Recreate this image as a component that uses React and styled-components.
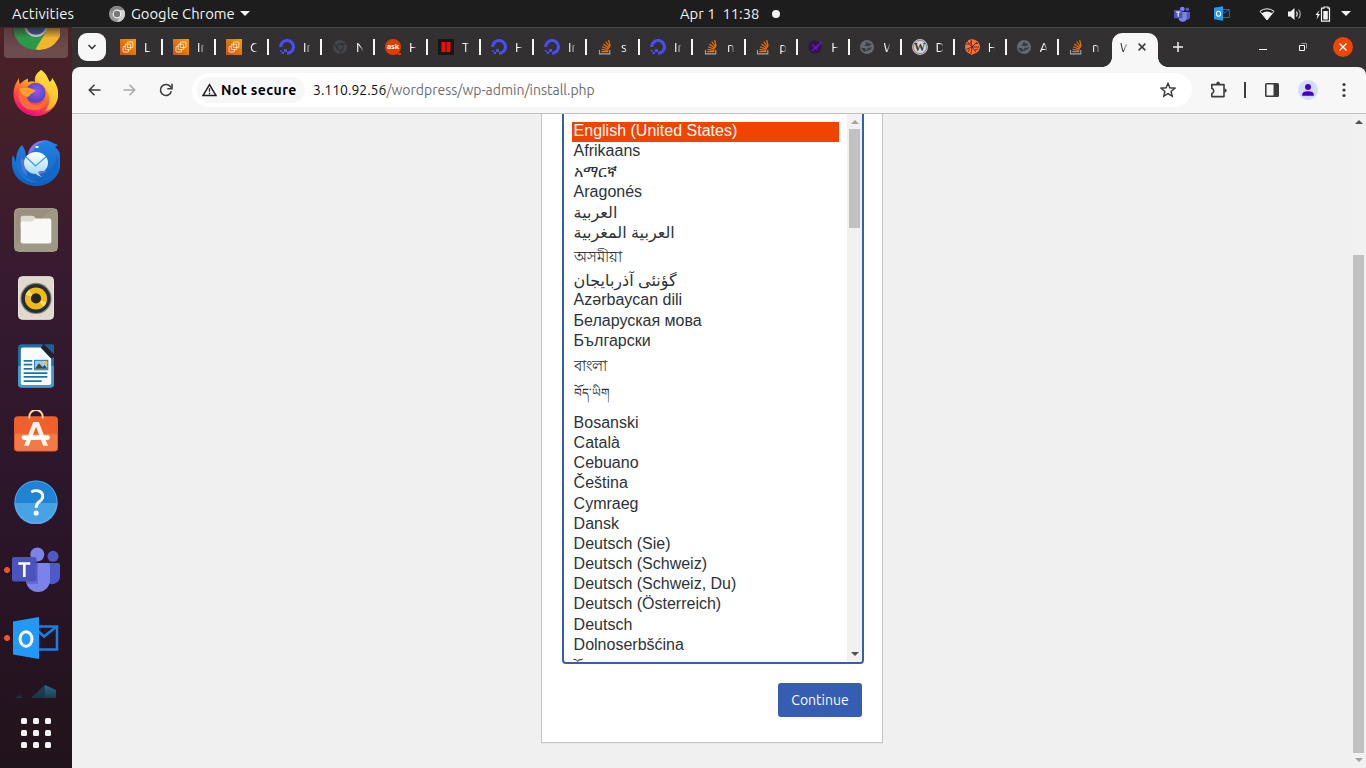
import React from "react";
import styled, { createGlobalStyle, css } from "styled-components";

const Global = createGlobalStyle`
  * { box-sizing: border-box; }
  html, body { margin: 0; padding: 0; overflow: hidden; }
  body { font-family: "Ubuntu", "Noto Sans", sans-serif; }
  svg { display: block; flex: none; }
`;

const Desktop = styled.div`
  width: 1366px;
  height: 768px;
  display: flex;
  flex-direction: column;
  overflow: hidden;
  background: #2c1527;
`;

/* ---------- system bar ---------- */
const SystemBar = styled.header`
  height: 27px;
  flex: none;
  display: grid;
  grid-template-columns: 660px 140px 1fr;
  align-items: center;
  background: #1d1d1d;
  color: #f2f2f2;
  font-size: 14.8px;
  line-height: 26px;
`;
const BarLeft = styled.div`
  display: flex;
  align-items: center;
  padding-left: 12px;
`;
const BarLabel = styled.span`
  white-space: pre;
  width: ${(p) => p.$w}px;
  letter-spacing: ${(p) => p.$ls || 0}px;
`;
const AppMenu = styled.div`
  display: flex;
  align-items: center;
  margin-left: 35px;
  gap: 6px;
`;
const Clock = styled.div`
  display: flex;
  align-items: center;
  padding-left: 20px;
`;
const Dot = styled.i`
  width: 8px;
  height: 8px;
  border-radius: 50%;
  background: #f2f2f2;
`;
const Tray = styled.div`
  display: flex;
  align-items: center;
  justify-content: flex-end;
  padding-right: 15px;
`;
const Gap = styled.span`
  flex: none;
  width: ${(p) => p.$w}px;
`;
const Caret = styled.i`
  border: 5px solid transparent;
  border-top-color: #f2f2f2;
  border-bottom: 0;
`;

/* ---------- dock ---------- */
const Body = styled.div`
  flex: 1;
  min-height: 0;
  display: flex;
`;
const Dock = styled.nav`
  width: 72px;
  flex: none;
  display: flex;
  flex-direction: column;
  align-items: center;
  background: linear-gradient(#4a2226 0, #431f29 100px, #361a30 260px, #2c162a 470px, #271423 600px, #21131b 741px);
`;
const ChromeSlot = styled.div`
  width: 64px;
  height: 30px;
  margin-top: 1px;
  flex: none;
  border-radius: 0 0 4px 4px;
  background: linear-gradient(#5a3a3e, #6d4c50 70%);
  display: flex;
  justify-content: center;
  overflow: hidden;
`;
const DockItem = styled.div`
  width: 72px;
  height: ${(p) => p.$h || 68}px;
  flex: none;
  display: flex;
  align-items: center;
  justify-content: center;
  ${(p) =>
    p.$running &&
    css`
      background: radial-gradient(circle at 7px 50%, #ee5424 2.6px, transparent 3.3px);
    `}
`;
const AppGrid = styled.div`
  display: grid;
  grid-template-columns: repeat(3, 6px);
  gap: 6px;
  margin-top: 11px;
`;
const AppDot = styled.i`
  width: 6px;
  height: 6px;
  border-radius: 1.5px;
  background: #f4f2f2;
`;

/* ---------- browser ---------- */
const Browser = styled.section`
  flex: 1;
  min-width: 0;
  display: flex;
  flex-direction: column;
  background: #323031;
`;
const TabStrip = styled.div`
  height: 40px;
  flex: none;
  display: flex;
  align-items: center;
  padding-left: 6px;
  border-top: 1px solid #474646;
`;
const TabSearch = styled.button`
  width: 28px;
  height: 28px;
  border: 0;
  padding: 0;
  margin: 0 14px 1px 0;
  border-radius: 9px;
  background: #f7f7f7;
  display: grid;
  place-items: center;
`;
const Tab = styled.div`
  width: ${(p) => p.$w}px;
  flex: none;
  display: flex;
  align-items: center;
  margin-bottom: 1px;
`;
const Favicon = styled.span`
  width: 16px;
  height: 16px;
  flex: none;
`;
const TabTitle = styled.span`
  width: 7px;
  height: 18px;
  line-height: 18px;
  margin-left: 8px;
  flex: none;
  font-size: 13.5px;
  overflow: hidden;
  white-space: nowrap;
  color: ${(p) => (p.$dark ? "#3c3c3c" : "#fff")};
  mask-image: linear-gradient(90deg, #000 50%, rgba(0, 0, 0, 0.2));
`;
const TabRule = styled.i`
  width: 2px;
  height: 16px;
  margin-left: 10px;
  background: #f7f7f7;
`;
const ActiveTab = styled.div`
  width: 46px;
  height: 34px;
  align-self: flex-end;
  flex: none;
  display: flex;
  align-items: center;
  gap: 11px;
  border-radius: 10px 10px 0 0;
  background: #f7f7f7;
  position: relative;
  padding-bottom: 6px;
  &::before,
  &::after {
    content: "";
    position: absolute;
    bottom: 0;
    width: 10px;
    height: 10px;
  }
  &::before {
    left: -10px;
    background: radial-gradient(circle at 0 0, transparent 9.6px, #f7f7f7 10.2px);
  }
  &::after {
    right: -10px;
    background: radial-gradient(circle at 100% 0, transparent 9.6px, #f7f7f7 10.2px);
  }
`;
const WindowControls = styled.div`
  display: flex;
  align-items: center;
  margin: 0 0 1px auto;
  padding-right: 13px;
`;
const CloseButton = styled.span`
  width: 20px;
  height: 20px;
  border-radius: 50%;
  background: #f04400;
  display: grid;
  place-items: center;
`;
const Toolbar = styled.div`
  height: 47px;
  flex: none;
  display: flex;
  align-items: center;
  background: #f7f7f7;
  border-bottom: 1px solid #c1c3c1;
  border-radius: 8px 8px 0 0;
  padding-left: 14px;
`;
const Omnibox = styled.div`
  width: 1000px;
  height: 34px;
  margin-left: 18px;
  flex: none;
  display: flex;
  align-items: center;
  border-radius: 17px;
  background: #fff;
  padding: 0 16px 0 5px;
  font-size: 14px;
`;
const SecurityChip = styled.div`
  width: 108px;
  height: 26px;
  border-radius: 13px;
  background: #f7f7f7;
  display: flex;
  align-items: center;
  padding-left: 5px;
  gap: 4px;
  font-weight: 700;
  font-size: 14px;
  letter-spacing: 0.4px;
  white-space: nowrap;
`;
const Url = styled.span`
  flex: 1;
  margin-left: 8px;
  color: #6e6e6e;
  font-size: 14px;
  white-space: nowrap;
  letter-spacing: -0.01px;
  b { font-weight: 400; color: #111; }
`;
const ToolbarRule = styled.i`
  width: 2px;
  height: 16px;
  background: #3c3c3c;
`;
const Avatar = styled.span`
  width: 20px;
  height: 20px;
  border-radius: 50%;
  background: #d3dcfd;
`;

/* ---------- page ---------- */
const Viewport = styled.div`
  flex: 1;
  min-height: 0;
  display: flex;
  background: #f0f0f0;
`;
const PageArea = styled.main`
  flex: 1;
  display: flex;
  justify-content: center;
  align-items: flex-start;
`;
const PageScroll = styled.div`
  width: 15px;
  flex: none;
  display: flex;
  flex-direction: column;
  align-items: center;
  background: #f1f1f1;
  padding: 6px 0 4px;
`;
const PageThumb = styled.i`
  width: 11px;
  height: 498px;
  margin: 131px 0 5px;
  background: #c1c1c1;
`;
const Arrow = styled.i`
  flex: none;
  border: 4px solid transparent;
  ${(p) =>
    p.$up
      ? css`border-top: 0; border-bottom-color: ${p.$c};`
      : css`border-bottom: 0; border-top-color: ${p.$c};`}
`;
const Card = styled.section`
  width: 342px;
  height: 629px;
  margin: 0 0 0 1px;
  padding: 0 18px 0 20px;
  display: flex;
  flex-direction: column;
  background: #fff;
  border: 1px solid #c3c4c7;
  border-top: 0;
  box-shadow: 0 1px 1px rgba(0, 0, 0, 0.04);
`;
const LanguageList = styled.div`
  width: 302px;
  height: 550px;
  flex: none;
  border: 2px solid #355db2;
  border-top: 0;
  border-radius: 0 0 4px 4px;
  display: flex;
  overflow: hidden;
`;
const Options = styled.ul`
  list-style: none;
  margin: 0;
  padding: 7.8px 8px 0 8px;
  width: 283px;
  flex: none;
  overflow: hidden;
  font-family: "Liberation Sans", "DejaVu Sans", sans-serif;
  font-size: 16px;
  color: #2c3338;
`;
const Option = styled.li`
  height: ${(p) => p.$h}px;
  line-height: ${(p) => p.$lh || p.$h - 1.4}px;
  padding-left: 1.6px;
  white-space: nowrap;
  font-size: ${(p) => p.$fs || 16}px;
  ${(p) =>
    p.$selected &&
    css`
      background: #f04400;
      color: #fff;
    `}
`;
const ListScroll = styled.div`
  width: 15px;
  background: #f1f1f1;
  display: flex;
  flex-direction: column;
  align-items: center;
  justify-content: space-between;
  padding: 6px 0;
`;
const ListThumbGroup = styled.div`
  display: flex;
  flex-direction: column;
  align-items: center;
  gap: 5px;
`;
const ListThumb = styled.i`
  width: 11px;
  height: 99px;
  background: #c1c1c1;
`;
const Continue = styled.button`
  width: 84px;
  height: 34px;
  margin: 19px 2px 0 0;
  align-self: flex-end;
  border: 0;
  border-radius: 3px;
  padding: 0;
  background: #355db2;
  color: #fff;
  font: 400 14px/34px "Ubuntu", "Noto Sans", sans-serif;
`;

/* ---------- icons ---------- */
const Aws = () => (
  <svg width="16" height="16" viewBox="0 0 16 16">
    <defs>
      <linearGradient id="aws" x1="0" y1="1" x2="1" y2="0">
        <stop offset="0" stopColor="#c8511b" />
        <stop offset="1" stopColor="#ff9900" />
      </linearGradient>
    </defs>
    <rect width="16" height="16" fill="url(#aws)" />
    <g fill="none" stroke="#fff" strokeWidth=".8" opacity=".92">
      <rect x="7.3" y="3" width="5.6" height="5.6" rx=".8" />
      <rect x="5.2" y="5.2" width="5.4" height="5.4" rx=".8" />
      <path d="M5 7.500H3.800q-.8 0-.8.8v3.900q0 .8.8.8h3.900q.8 0 .8-.8v-1.500" />
    </g>
  </svg>
);
const Ocean = () => (
  <svg width="16" height="16" viewBox="0 0 16 16">
    <path d="M8 14.3A6.4 6.4 0 1 0 1.7 8" fill="none" stroke="#4a4cf5" strokeWidth="3.1" />
    <path d="M5 10h3v3H5zM2.7 12.8H5V15H2.7zM.9 11h1.8v1.8H.9z" fill="#4a4cf5" />
  </svg>
);
const DarkChrome = () => (
  <svg width="16" height="16" viewBox="0 0 16 16">
    <circle cx="8" cy="8" r="7" fill="#454649" />
    <circle cx="8" cy="8" r="3.2" fill="none" stroke="#303133" strokeWidth="1.2" />
    <path d="M8 4.8h6.2M5.2 9.6 2.1 4.4M10.8 9.6 7.7 15" stroke="#303133" strokeWidth="1.1" />
  </svg>
);
const AskText = styled.text`
  font: 700 7.6px "Noto Sans", sans-serif;
`;
const Ask = () => (
  <svg width="16" height="16" viewBox="0 0 16 16">
    <circle cx="8" cy="8" r="8" fill="#e63a05" />
    <path d="M10 14h6v2h-2z" fill="#e63a05" />
    <AskText x="1.9" y="10.3" fill="#fff" textLength="12.2" lengthAdjust="spacingAndGlyphs">ask</AskText>
  </svg>
);
const RedBars = () => (
  <svg width="16" height="16" viewBox="0 0 16 16">
    <rect width="16" height="16" fill="#1b1616" />
    <path d="M3.5 3h4v10h-3q-1 0-1-1zM8.500 3h4v9q0 1-1 1h-3z" fill="#f90a0a" />
  </svg>
);
const Stack = () => (
  <svg width="16" height="16" viewBox="0 0 16 16">
    <path d="M2.5 11v3.9h10.3V11" fill="none" stroke="#a5a7aa" strokeWidth="1.1" />
    <g stroke="#f2700c" strokeWidth="1.2">
      <path d="M4.3 12.7h7M4.5 10.4l6.8 1.1M5 7.7l6.6 2.6M6.4 4.9l5.7 4.3M8.7 2.5l4.2 5.8M11.6 1l1.6 6.2" />
    </g>
  </svg>
);
const PurpleX = () => (
  <svg width="16" height="16" viewBox="0 0 16 16">
    <circle cx="8" cy="8" r="7.1" fill="#2b1a39" stroke="#43205d" strokeWidth="1" />
    <path d="M4.6 12 14.800 2.600 9.800 8.600z" stroke="#6d12d8" strokeWidth="1.100" fill="#6d12d8" />
    <path d="m5.2 5 5.2 6" stroke="#6d12d8" strokeWidth="1.2" />
  </svg>
);
const Globe = () => (
  <svg width="16" height="16" viewBox="0 0 16 16">
    <circle cx="8" cy="8" r="7" fill="#666a70" />
    <path d="M8.500 2.600 6.600 4.200v1.500L5 7h4.600v1.700H8.300v1.900H6.500L6 9H3.600L2.600 7.900a5.400 5.400 0 0 0 3.600 5.200v-1.200h2.200l2.100-1.300h1.200q1-1.200.9-2.600h-1.800V6.200h1.500q-.2-1.500-1.700-2.500L9.300 5z" fill="#3a3a3c" />
    <path d="M9.600 7h1.800v2H9.600z" fill="#666a70" />
  </svg>
);
const WpMark = styled.text`
  font: 700 11.5px "Liberation Serif", serif;
`;
const WordPress = () => (
  <svg width="16" height="16" viewBox="0 0 16 16">
    <circle cx="8" cy="8" r="7.4" fill="#d9dadb" stroke="#b9babb" strokeWidth="1.1" />
    <circle cx="8" cy="8" r="6.5" fill="none" stroke="#4e4f50" strokeWidth=".6" />
    <WpMark x="2" y="12" fill="#3b3b3c" textLength="12">W</WpMark>
  </svg>
);
const OrangeBall = () => (
  <svg width="16" height="16" viewBox="0 0 16 16">
    <path d="M8 .3A7.7 7.4 0 0 1 9.5 15L7.3 16l-1-1.1A7.5 7.5 0 0 1 8 .3z" fill="#ff7038" />
    <path d="m8 8-5-6M8 8 7 1m1 7 5-5M8 8h7M8 8l4 5M8 8l-1 7M8 8l-6 2.5M2 5l3.5.3L8 2M11 4.8l3-.3M10.5 11l3.5-1M4 13l1.5-3" stroke="#473028" strokeWidth=".9" fill="none" />
  </svg>
);
const MiniTeams = () => (
  <svg width="16" height="16" viewBox="0 0 48 46">
    <circle cx="40" cy="9" r="5.5" fill="#5059c9" />
    <path d="M30 17h18v14a9 9 0 0 1-18 0z" fill="#5059c9" />
    <circle cx="25" cy="8" r="7" fill="#7b83eb" />
    <path d="M14 17h24v17a12 12 0 0 1-24 0z" fill="#7b83eb" />
    <rect y="11" width="25" height="25" rx="2" fill="#4b53bc" />
    <path d="M6 17h13M12.5 17v14" stroke="#fff" strokeWidth="3.5" />
  </svg>
);
const Teams = () => (
  <svg width="48" height="46" viewBox="0 0 48 46">
    <circle cx="41" cy="9.3" r="5.5" fill="#5059c9" />
    <path d="M30 16h16.500q1.500 0 1.500 1.500V29a8 8 0 0 1-12 7z" fill="#5059c9" />
    <circle cx="25.300" cy="7.500" r="7" fill="#7b83eb" />
    <path d="M14 16h22.500q1.500 0 1.500 1.500V33a12 12 0 0 1-24 0z" fill="#7b83eb" />
    <path d="M14 16h12v21H14.400z" fill="#5961c2" opacity=".7" />
    <rect y="10" width="24.500" height="24.500" rx="2" fill="#4b53bc" />
    <path d="M6.300 16.500h12M12.300 16.500v13.500" stroke="#fff" strokeWidth="2.700" fill="none" />
  </svg>
);
const Outlook = ({ w = 46, h = 42 }) => (
  <svg width={w} height={h} viewBox="0 0 46 42">
    <path d="M24 9.500h20v23H24M25 14l6 5.500L43 10" fill="none" stroke="#1a7ee0" strokeWidth="2.500" />
    <path d="M0 4.500 26 0v42L0 37.500z" fill="#2299f8" />
    <ellipse cx="13" cy="22" rx="6" ry="7.300" fill="none" stroke="#fff" strokeWidth="3" />
  </svg>
);
const MenuChrome = () => (
  <svg width="16" height="16" viewBox="0 0 16 16">
    <circle cx="8" cy="8" r="8" fill="#9a9a9a" />
    <path d="M8 4h7a8 8 0 0 1-7 12l3.400-6z" fill="#cfcfcf" />
    <path d="M8 0a8 8 0 0 0-7 4l3.500 6L8 4h7a8 8 0 0 0-7-4z" fill="#858585" />
    <circle cx="8" cy="8" r="3.800" fill="#777" stroke="#f4f4f4" strokeWidth="1.200" />
  </svg>
);
const DockChrome = () => (
  <svg width="48" height="24" viewBox="0 24 48 24">
    <defs>
      <linearGradient id="fade" x1="0" y1="0" x2="0" y2="1">
        <stop offset="0" stopColor="#37222a" stopOpacity=".65" />
        <stop offset="1" stopColor="#37222a" stopOpacity="0" />
      </linearGradient>
    </defs>
    <circle cx="24" cy="23" r="23" fill="#2a9a48" />
    <path d="M24 12h23A23 23 0 0 1 26 46l-2.500-1L34 28z" fill="#f1b62b" />
    <circle cx="24" cy="21" r="12" fill="#d9d5dc" />
    <circle cx="24" cy="21" r="9.800" fill="#3c4e96" />
    <path d="M0 24h48v10H0z" fill="url(#fade)" />
  </svg>
);
const Firefox = () => (
  <svg width="46" height="46" viewBox="0 0 46 46">
    <defs>
      <linearGradient id="fx" x1=".8" y1="0" x2=".35" y2="1">
        <stop offset=".1" stopColor="#fff04a" />
        <stop offset=".4" stopColor="#ff9a26" />
        <stop offset=".68" stopColor="#ff4c3e" />
        <stop offset="1" stopColor="#e60a80" />
      </linearGradient>
      <radialGradient id="fxc" cx=".55" cy=".4">
        <stop offset="0" stopColor="#9059f0" />
        <stop offset="1" stopColor="#5b45c0" />
      </radialGradient>
    </defs>
    <path d="M28 0c6 4 7 9 8.500 12 2-1 2.500-2 2.500-4 5 7 6.500 12 6 18C44 38 34 46 23 46S0 37 .500 23C1 16 3 13 6 8c0 3 0 5 1 6 3-3 6-5 8-5.500L15 12c3-1 5-1 7 0-1-6 2-9 6-12z" fill="url(#fx)" />
    <path d="M28 0c6 4 7 9 8.500 12 2-1 2.500-2 2.500-4 5 7 6.500 12 6 18-1 9-7 14-13 15 7-8 5-18-1-25-6-4-11-5-3-16z" fill="#ffd936" opacity=".75" />
    <circle cx="22.500" cy="23" r="10.200" fill="url(#fxc)" />
    <path d="M6 18c5-3 10 0 16 2 1 2-4 3-5 5s-4 3-4 1 1 5 4 7c7 4 13 1 18-4-2 9-9 12-16 11C8 39 4 29 6 18z" fill="#ff6a3a" />
    <path d="M6 19c5-3 10-1 16.500 1.300-1 2.500-4.500 2.700-5.500 4.700-2 3-6 1-8-1z" fill="#ffa22b" />
  </svg>
);
const Thunderbird = () => (
  <svg width="48" height="46" viewBox="0 0 48 46">
    <defs>
      <linearGradient id="tb" x1="0" y1="0" x2="0" y2="1">
        <stop offset="0" stopColor="#2383e8" />
        <stop offset="1" stopColor="#105fb8" />
      </linearGradient>
      <linearGradient id="env" x1="0" y1="0" x2="0" y2="1">
        <stop offset="0" stopColor="#fff" />
        <stop offset="1" stopColor="#a8dcff" />
      </linearGradient>
    </defs>
    <path d="M10 5c3 4 4 8 4 12l3-5C19 4 29-1 37 1c3 1 5 3 9 4l-3 2c5 4 5 7 5 11 3 15-8 28-23 28C10 46 0 36 0 23c0-4 0-6 1-8l3 7C4 13 6 9 10 5z" fill="url(#tb)" />
    <path d="M16 14C18 5 26-1 36 1 28 1 22 6 22 10z" fill="#8b74e4" />
    <path d="M35 31c6-2 10-9 9-17 6 12-2 25-14 28z" fill="#1268ca" />
    <path d="M8 18c-2 13 6 23 21 24-10 2-22-2-25-18z" fill="#1675d7" />
    <path d="M9 19c-1 8 1 14 6 17l-1-16z" fill="#6f7be4" opacity=".6" />
    <ellipse cx="24" cy="23" rx="12" ry="11" fill="url(#env)" />
    <path d="M22 33c3 1 8 2 13-2l-6 0z" fill="#7667d3" />
    <path d="M22 32q3 4 8 5-4-3-4-6z" fill="#a8dcff" />
    <path d="m14 17 9.500 9L34 17" fill="none" stroke="#4c98de" strokeWidth="1.300" />
    <ellipse cx="25" cy="7" rx="1.800" ry="1" fill="#fff" />
  </svg>
);
const Files = () => (
  <svg width="44" height="44" viewBox="0 0 46 46">
    <rect x=".7" y=".7" width="44.600" height="44.600" rx="4" fill="#98907d" stroke="#b5ac99" />
    <path d="M1 39 39 1h6v44H1z" fill="#a39b89" opacity=".7" />
    <path d="M7 10q0-2 2-2h10q2 0 3 2l1 2h8v8H7z" fill="#dedbcf" />
    <path d="M7 16q0-2 2-2h10l3-3h15q2 0 2 2v22q0 2-2 2H9q-2 0-2-2z" fill="#f8f8f7" />
  </svg>
);
const Speaker = () => (
  <svg width="36" height="44" viewBox="0 0 38 46">
    <rect x=".5" y=".5" width="37" height="45" rx="4" fill="#dfdacd" stroke="#f0ece2" />
    <circle cx="19" cy="23.500" r="16.500" fill="#83847f" />
    <circle cx="19" cy="23.500" r="15.300" fill="#272d38" />
    <circle cx="19" cy="23.500" r="11.700" fill="#f2ba15" />
    <path d="M19 23.500 8 19.500a11.700 11.700 0 0 1 3.300-4.800zM19 23.500l8 8.600a11.700 11.700 0 0 0 3-4.600z" fill="#f9dc61" />
    <circle cx="19" cy="23.500" r="5.400" fill="#24262a" />
  </svg>
);
const Writer = () => (
  <svg width="36" height="44" viewBox="0 0 38 46">
    <path d="M4 0h22l12 14v28q0 4-4 4H4q-4 0-4-4V4q0-4 4-4z" fill="#1f6ea6" />
    <path d="M0 23h38v19q0 4-4 4H4q-4 0-4-4z" fill="#4399c8" />
    <path d="M5 3.500h19L35 15v26q0 2-2 2H5q-2 0-2-2V5.500q0-2 2-2z" fill="#f8fafb" />
    <path d="M27.500 0H36q2 0 2 2v8.500z" fill="#1c648f" />
    <path d="M24 3.500 35 15l3-1.500L27 0z" fill="#23202f" />
    <path d="M6 17.500h9M6 21.500h9M6 26h9M6 30.500h25M6 34.500h25M6 39h19" stroke="#1b75ad" strokeWidth="1.900" />
    <rect x="17.500" y="17" width="14" height="10" fill="#9acbe8" stroke="#1b75ad" />
    <path d="m18 26 4-6 4 4 2-2 3 4z" fill="#394c55" />
    <circle cx="29" cy="19.500" r="1.800" fill="#f5c431" />
  </svg>
);
const Software = () => (
  <svg width="44" height="42" viewBox="0 0 46 44">
    <rect y="6.500" width="46" height="37" rx="4" fill="#f0602a" />
    <path d="M1 25h44v14q0 3.500-3.500 3.500h-37Q1 42.500 1 39z" fill="#f37a47" />
    <path d="M16 9V7a6.800 6.800 0 0 1 14 0v2" fill="none" stroke="#f7d9a4" strokeWidth="2" />
    <path d="m10.500 37.500 9.500-25h6l9.500 25h-5l-7.500-20-7.500 20z" fill="#fff4ec" />
    <rect x="8" y="26.500" width="29.500" height="4.800" rx="2.400" fill="#fff" />
  </svg>
);
const Help = () => (
  <svg width="44" height="44" viewBox="0 0 46 46">
    <circle cx="23" cy="23" r="22.500" fill="#2183d3" />
    <path d="M.5 24h45a22.500 22.500 0 0 1-45 0z" fill="#47a3e3" />
    <circle cx="23" cy="23" r="22" fill="none" stroke="#64b4ec" opacity=".7" />
    <path d="M18 12.500q4-2 7.500-1 5 1.500 4.500 6-.3 3-4 5.500-2.800 2-2.800 6" fill="none" stroke="#fff" strokeWidth="3" />
    <circle cx="23.200" cy="34.500" r="2.700" fill="#fff" />
  </svg>
);
const Peek = () => (
  <svg width="42" height="13" viewBox="0 0 42 13">
    <defs>
      <linearGradient id="peek" x1="0" y1="0" x2="0" y2="1">
        <stop offset="0" stopColor="#2a6d8c" />
        <stop offset="1" stopColor="#1d3b4d" />
      </linearGradient>
    </defs>
    <path d="M16 13 30 0l11 5v8z" fill="url(#peek)" />
    <path d="M30 0v13H16z" fill="#173547" opacity=".7" />
    <path d="m0 13 4-3 4 3z" fill="#183544" />
  </svg>
);
const Line = ({ d, w = 16, h = 16, c = "#3c3c3c", s = 1.6 }) => (
  <svg width={w} height={h} viewBox={`0 0 ${w} ${h}`}>
    <path d={d} fill="none" stroke={c} strokeWidth={s} />
  </svg>
);
const Wifi = () => (
  <svg width="16" height="14" viewBox="0 0 16 14">
    <path d="M1 4.300a11 11 0 0 1 14 0L8 13z" fill="none" stroke="#f2f2f2" strokeWidth="1" />
    <path d="M2.800 6.300a8 8 0 0 1 10.400 0L8 13z" fill="#f2f2f2" />
  </svg>
);
const Volume = () => (
  <svg width="16" height="14" viewBox="0 0 16 14">
    <path d="M1 4.500h2.500L7.500 1v12l-4-3.500H1z" fill="#f2f2f2" />
    <path d="M9.500 4.500q1.600 2.500 0 5" fill="none" stroke="#f2f2f2" strokeWidth="1.200" />
    <path d="M11.500 2.500q3.500 4.500 0 9" fill="none" stroke="#aaa" strokeWidth="1.200" />
  </svg>
);
const Battery = () => (
  <svg width="16" height="16" viewBox="0 0 16 16">
    <path d="M4.500 4 .500 9h2L1.600 13.500 5 8H3z" fill="#f2f2f2" />
    <path d="M9 2.200V1h4v1.200h1.500v13h-8v-13z" fill="none" stroke="#f2f2f2" strokeWidth="1.200" />
    <path d="M8.300 5h4.500v8.500H8.300z" fill="#f2f2f2" />
  </svg>
);
const Puzzle = () => (
  <svg width="20" height="20" viewBox="0 0 20 20">
    <path d="M2.800 4.600H15v12H2.800v-3q1.900-.7 1.900-2.600T2.800 8.300z" fill="none" stroke="#3c3c3c" strokeWidth="1.600" strokeLinejoin="round" />
    <path d="M7.200 4a1.800 2.400 0 0 1 3.800 0zM15.500 8.500a2.200 2.100 0 0 1 0 4.200z" fill="#3c3c3c" />
  </svg>
);
const SidePanel = () => (
  <svg width="14" height="14" viewBox="0 0 14 14">
    <rect x=".8" y=".8" width="12.400" height="12.400" rx=".8" fill="none" stroke="#3c3c3c" strokeWidth="1.600" />
    <path d="M8.500 1h4.500v12H8.500z" fill="#3c3c3c" />
  </svg>
);
const Dots = () => (
  <svg width="4" height="16" viewBox="0 0 4 16">
    {[2.5, 8, 13.5].map((y) => (
      <circle key={y} cx="2" cy={y} r="1.600" fill="#3c3c3c" />
    ))}
  </svg>
);
const Person = () => (
  <svg width="20" height="20" viewBox="0 0 20 20">
    <circle cx="10" cy="7" r="3" fill="#4200c8" />
    <path d="M4.200 15.800v-1.200q0-3.400 5.800-3.400t5.800 3.400v1.200z" fill="#4200c8" />
  </svg>
);
const Star = () => (
  <svg width="16" height="16" viewBox="0 0 16 16">
    <path d="m8 1.300 1.900 4.500 4.900.4-3.700 3.200 1.100 4.800L8 11.700l-4.200 2.500 1.100-4.800L1.200 6.200l4.900-.4z" fill="none" stroke="#3c3c3c" strokeWidth="1.500" />
  </svg>
);
const Warning = () => (
  <svg width="15" height="14" viewBox="0 0 15 14">
    <path d="M7.500 1.700 14 12.600H1z" fill="none" stroke="#1f1f1f" strokeWidth="1.500" />
    <path d="M7.500 5.200v3.600M7.500 9.800v1.400" stroke="#1f1f1f" strokeWidth="1.300" />
  </svg>
);
const Reload = () => (
  <svg width="14" height="14" viewBox="0 0 14 14">
    <path d="M12.300 8.300A5.500 5.500 0 1 1 11.300 3.600L12.600 5" fill="none" stroke="#3c3c3c" strokeWidth="1.600" />
    <path d="M13 .7v5H8.300" fill="none" stroke="#3c3c3c" strokeWidth="1.600" />
  </svg>
);

/* ---------- data ---------- */
const tabs = [
  [Aws, "L"], [Aws, "In"], [Aws, "C"], [Ocean, "In"], [DarkChrome, "N"], [Ask, "H"],
  [RedBars, "T"], [Ocean, "H"], [Ocean, "In"], [Stack, "s"], [Ocean, "In"], [Stack, "n"],
  [Stack, "p"], [PurpleX, "H"], [Globe, "W"], [WordPress, "D"], [OrangeBall, "H"], [Globe, "A"],
  [Stack, "n"],
];

const languages = [
  { t: "English (United States)", selected: true },
  { t: "Afrikaans" },
  { t: "አማርኛ", h: 21, lh: 19.5 },
  { t: "Aragonés", h: 20.6, lh: 18.8 },
  { t: "العربية" },
  { t: "العربية المغربية" },
  { t: "অসমীয়া", h: 26, lh: 27, fs: 14.6 },
  { t: "گؤنئی آذربایجان", h: 21.2, lh: 21.8 },
  { t: "Azərbaycan dili" },
  { t: "Беларуская мова" },
  { t: "Български" },
  { t: "বাংলা", h: 27, lh: 29, fs: 14.6 },
  { t: "བོད་ཡིག", h: 34.9, lh: 29, fs: 12 },
  { t: "Bosanski" },
  { t: "Català" },
  { t: "Cebuano" },
  { t: "Čeština" },
  { t: "Cymraeg" },
  { t: "Dansk" },
  { t: "Deutsch (Sie)" },
  { t: "Deutsch (Schweiz)" },
  { t: "Deutsch (Schweiz, Du)" },
  { t: "Deutsch (Österreich)" },
  { t: "Deutsch" },
  { t: "Dolnoserbšćina" },
  { t: "རྫོང་ཁ", h: 34.6, lh: 23, fs: 12 },
];

export default function App() {
  return (
    <>
      <Global />
      <Desktop>
        <SystemBar>
          <BarLeft>
            <BarLabel $w={62} $ls={0.15}>Activities</BarLabel>
            <AppMenu>
              <MenuChrome />
              <BarLabel $w={103}>Google Chrome</BarLabel>
              <Caret />
            </AppMenu>
          </BarLeft>
          <Clock>
            <BarLabel $w={92}>{"Apr 1  11:38"}</BarLabel>
            <Dot />
          </Clock>
          <Tray>
            <MiniTeams />
            <Gap $w={24} />
            <Outlook w={16} h={15} />
            <Gap $w={29} />
            <Wifi />
            <Gap $w={12} />
            <Volume />
            <Gap $w={12} />
            <Battery />
            <Gap $w={10} />
            <Caret />
          </Tray>
        </SystemBar>

        <Body>
          <Dock>
            <ChromeSlot><DockChrome /></ChromeSlot>
            <DockItem $h={70}><Firefox /></DockItem>
            <DockItem $h={70}><Thunderbird /></DockItem>
            <DockItem $h={64}><Files /></DockItem>
            <DockItem $h={72}><Speaker /></DockItem>
            <DockItem $h={64}><Writer /></DockItem>
            <DockItem $h={66}><Software /></DockItem>
            <DockItem $h={76}><Help /></DockItem>
            <DockItem $h={60} $running><Teams /></DockItem>
            <DockItem $h={76} $running><Outlook /></DockItem>
            <DockItem $h={31}><Peek /></DockItem>
            <AppGrid>
              {Array.from({ length: 9 }, (_, i) => <AppDot key={i} />)}
            </AppGrid>
          </Dock>

          <Browser>
            <TabStrip>
              <TabSearch>
                <Line w={10} h={8} d="M1.500 2 5 5.500 8.500 2" />
              </TabSearch>
              {tabs.map(([Icon, title], i) => (
                <Tab key={i} $w={i < 11 ? 53 : i === 18 ? 43.95 : 52.15}>
                  <Favicon><Icon /></Favicon>
                  <TabTitle>{title}</TabTitle>
                  {i < 18 && <TabRule />}
                </Tab>
              ))}
              <ActiveTab>
                <TabTitle $dark>W</TabTitle>
                <Line w={8} h={8} d="M.6.6l6.800 6.800M7.400.6.6 7.400" s={1.5} />
              </ActiveTab>
              <Gap $w={15} />
              <Line w={10} h={11} d="M5 0v10M0 5h10" c="#f0f0f0" s={1.5} />
              <WindowControls>
                <Line w={8} h={8} d="M0 6.500h8" c="#fff" s={1} />
                <Gap $w={32} />
                <svg width="8" height="8" viewBox="0 0 8 8">
                  <path d="M2.500.500h5v5" fill="none" stroke="#999" />
                  <path d="M.5 2.500h5v5h-5z" fill="none" stroke="#fff" />
                </svg>
                <Gap $w={26} />
                <CloseButton>
                  <Line w={8} h={8} d="M.5.5l7 7M7.500.5l-7 7" c="#fff" s={1.4} />
                </CloseButton>
              </WindowControls>
            </TabStrip>

            <Toolbar>
              <Gap $w={2} />
              <Line w={13} h={12} d="M12.500 6H1.500M6.500.8 1.300 6l5.200 5.200" />
              <Gap $w={22} />
              <Line w={13} h={12} d="M.5 6h11M6.500.8 11.700 6l-5.200 5.200" c="#aaa" />
              <Gap $w={23} />
              <Reload />
              <Gap $w={1} />
              <Omnibox>
                <SecurityChip>
                  <Warning />
                  Not secure
                </SecurityChip>
                <Url><b>3.110.92.56</b>/wordpress/wp-admin/install.php</Url>
                <Star />
              </Omnibox>
              <Gap $w={17} />
              <Puzzle />
              <Gap $w={15} />
              <ToolbarRule />
              <Gap $w={19} />
              <SidePanel />
              <Gap $w={19} />
              <Avatar><Person /></Avatar>
              <Gap $w={24} />
              <Dots />
            </Toolbar>

            <Viewport>
              <PageArea>
                <Card>
                  <LanguageList>
                    <Options>
                      {languages.map((l) => (
                        <Option key={l.t} $selected={l.selected} $h={l.h || 20.2} $lh={l.lh} $fs={l.fs}>
                          {l.t}
                        </Option>
                      ))}
                    </Options>
                    <ListScroll>
                      <ListThumbGroup>
                        <Arrow $up $c="#a3a3a3" />
                        <ListThumb />
                      </ListThumbGroup>
                      <Arrow $c="#505050" />
                    </ListScroll>
                  </LanguageList>
                  <Continue>Continue</Continue>
                </Card>
              </PageArea>
              <PageScroll>
                <Arrow $up $c="#505050" />
                <PageThumb />
                <Arrow $c="#a3a3a3" />
              </PageScroll>
            </Viewport>
          </Browser>
        </Body>
      </Desktop>
    </>
  );
}
